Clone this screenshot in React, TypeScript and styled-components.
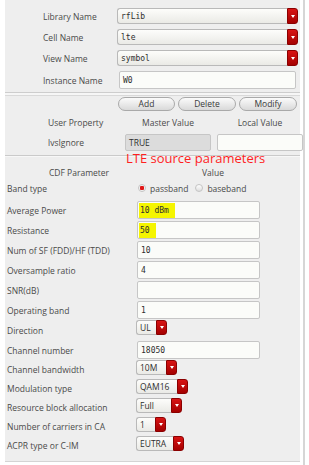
import React from "react";
import styled, { createGlobalStyle } from "styled-components";

const GlobalStyle = createGlobalStyle`
	html, body {
		margin: 0;
		padding: 0;
		background: #ffffff;
	}
	body {
		font-family: "Open Sans", "Noto Sans", sans-serif;
		font-size: 8.5px;
		color: #4a4a4a;
	}
`;

const Frame = styled.div`
	display: flex;
	width: 309px;
	height: 465px;
	padding-left: 5px;
	box-sizing: border-box;
	overflow: hidden;
`;

const Panel = styled.div`
	position: relative;
	width: 295px;
	height: 461px;
	background: #eeeeee;
	border-bottom: 1px solid #d4d4d4;
	display: flex;
	flex-direction: column;
`;

const ScrollEdge = styled.div`
	width: 2px;
	margin-left: 3px;
	height: 100%;
	background: #d6d6d6;
`;

/* ---------- top section ---------- */
const TopSection = styled.div`
	display: flex;
	flex-direction: column;
	gap: 5px;
	padding: 8px 2px 3px 38px;
`;

const TopRow = styled.div`
	display: grid;
	grid-template-columns: 74px 1fr;
	align-items: center;
`;

const Label = styled.span`
	white-space: nowrap;
	font-size: 8.5px;
	color: #4a4a4a;
`;

const Groove = styled.div`
	height: 2px;
	border-top: 1px solid #cdcdcd;
	border-bottom: 1px solid #d9d9d9;
	background: #f6f6f6;
`;

const Line = styled.div`
	height: 1px;
	background: #cacaca;
	border-bottom: 1px solid #f7f7f7;
`;

const Field = styled.div<{ $h?: number; $mono?: boolean; $grey?: boolean; $indent?: number }>`
	height: ${(p) => p.$h ?? 18}px;
	box-sizing: border-box;
	margin-left: ${(p) => p.$indent ?? 0}px;
	border: 1px solid #c6c6c6;
	border-radius: 2px;
	background: ${(p) => (p.$grey ? "#dcdcdc" : "#fbfcf9")};
	display: flex;
	align-items: center;
	padding-left: 3px;
	font-family: ${(p) => (p.$mono ? '"DejaVu Sans Mono", "Liberation Mono", monospace' : '"Open Sans", sans-serif')};
	font-size: ${(p) => (p.$mono ? 8 : 8.5)}px;
	color: #2e2e2e;
	white-space: pre;
`;

const Combo = styled.div<{ $w?: number; $h: number }>`
	display: flex;
	width: ${(p) => (p.$w ? `${p.$w}px` : "100%")};
	height: ${(p) => p.$h}px;
`;

const ComboText = styled.div<{ $mono?: boolean }>`
	flex: 1;
	box-sizing: border-box;
	border: 1px solid #b9b9b9;
	border-right: none;
	border-radius: 3px 0 0 3px;
	background: linear-gradient(#fdfdfb, #eaeae6);
	display: flex;
	align-items: center;
	padding-left: 3px;
	font-family: ${(p) => (p.$mono ? '"DejaVu Sans Mono", "Liberation Mono", monospace' : '"Open Sans", sans-serif')};
	font-size: ${(p) => (p.$mono ? 8 : 8.5)}px;
	color: #2e2e2e;
`;

const DropButton = styled.div`
	width: 11px;
	border-radius: 0 3px 3px 0;
	background: linear-gradient(#d81414, #a50000);
	border: 1px solid #8a0000;
	box-sizing: border-box;
	display: flex;
	align-items: center;
	justify-content: center;
`;

const Caret = styled.span`
	width: 0;
	height: 0;
	border-left: 2.5px solid transparent;
	border-right: 2.5px solid transparent;
	border-top: 3px solid #ffffff;
`;

/* ---------- property section ---------- */
const PropSection = styled.div`
	display: flex;
	flex-direction: column;
	padding: 1px 0 4px 0;
`;

const ButtonBar = styled.div`
	display: flex;
	gap: 3px;
	margin-left: 113px;
`;

const PillButton = styled.button<{ $w: number }>`
	width: ${(p) => p.$w}px;
	height: 14px;
	padding: 0;
	border: 1px solid #a9a9a9;
	border-radius: 7px;
	background: linear-gradient(#fbfbfb, #d9d9d9);
	font-family: "Open Sans", sans-serif;
	font-size: 8.5px;
	color: #3a3a3a;
	line-height: 12px;
`;

const PropGrid = styled.div<{ $top: number; $h: number }>`
	display: grid;
	grid-template-columns: 71px 86px 86px;
	column-gap: 6px;
	align-items: center;
	margin: ${(p) => p.$top}px 0 0 43px;
	height: ${(p) => p.$h}px;
`;

const HeadCell = styled.span<{ $shift?: number; $align?: string }>`
	text-align: ${(p) => p.$align ?? "center"};
	padding-left: ${(p) => p.$shift ?? 0}px;
	white-space: nowrap;
	font-size: 8.5px;
	color: #4a4a4a;
`;

/* ---------- cdf section ---------- */
const CdfSection = styled.div`
	display: flex;
	flex-direction: column;
	padding: 7px 0 0 2px;
`;

const Annotation = styled.div`
	position: absolute;
	top: 149px;
	left: 121px;
	font-family: "Open Sans", "Noto Sans", sans-serif;
	font-size: 13px;
	color: #ff1f1f;
	white-space: nowrap;
`;

const CdfRow = styled.div<{ $h: number }>`
	display: grid;
	grid-template-columns: 129px 1fr;
	height: ${(p) => p.$h}px;
	align-items: center;
`;

const ComboCell = styled.div`
	align-self: start;
	display: flex;
`;

const FieldCell = styled.div`
	width: 123px;
	margin-left: 1px;
`;

const Mark = styled.span`
	background: #f5f500;
	padding: 3px 6px 3px 1px;
	margin-left: -2px;
`;

const RadioGroup = styled.div`
	display: flex;
	align-items: center;
	margin-left: 2px;
	gap: 4px;
`;

const Radio = styled.span<{ $on?: boolean }>`
	width: 8px;
	height: 8px;
	box-sizing: border-box;
	border-radius: 50%;
	border: 1px solid #c4c4c4;
	background: ${(p) => (p.$on ? "radial-gradient(circle, #e01818 0 2px, #f4f4f4 2.5px)" : "linear-gradient(#ffffff, #dedede)")};
`;

const RadioLabel = styled.span`
	margin-right: 3px;
	font-size: 8.5px;
	color: #4a4a4a;
`;

type ComboProps = { value: string; w?: number; h: number; mono?: boolean };

const ComboBox = ({ value, w, h, mono }: ComboProps) => (
	<Combo $w={w} $h={h}>
		<ComboText $mono={mono}>{value}</ComboText>
		<DropButton>
			<Caret />
		</DropButton>
	</Combo>
);

const cdfFields: { label: string; value: React.ReactNode }[] = [
	{ label: "Average Power", value: <Mark>10 dBm</Mark> },
	{ label: "Resistance", value: <Mark>50</Mark> },
	{ label: "Num of SF (FDD)/HF (TDD)", value: "10" },
	{ label: "Oversample ratio", value: "4" },
	{ label: "SNR(dB)", value: "" },
	{ label: "Operating band", value: "1" },
];

const cdfCombos: { label: string; value: string; w: number; h: number }[] = [
	{ label: "Channel bandwidth", value: "10M", w: 41, h: 19 },
	{ label: "Modulation type", value: "QAM16", w: 52, h: 19 },
	{ label: "Resource block allocation", value: "Full", w: 46, h: 19 },
	{ label: "Number of carriers in CA", value: "1", w: 30, h: 19 },
	{ label: "ACPR type or C-IM", value: "EUTRA", w: 48, h: 19 },
];

const App: React.FC = () => {
	return (
		<>
			<GlobalStyle />
			<Frame>
				<Panel>
					<TopSection>
						<TopRow>
							<Label>Library Name</Label>
							<ComboBox value="rfLib" h={16} mono />
						</TopRow>
						<TopRow>
							<Label>Cell Name</Label>
							<ComboBox value="lte" h={16} mono />
						</TopRow>
						<TopRow>
							<Label>View Name</Label>
							<ComboBox value="symbol" h={16} mono />
						</TopRow>
						<TopRow>
							<Label>Instance Name</Label>
							<Field $h={18} $mono $indent={2} style={{ marginRight: 2 }}>
								W0
							</Field>
						</TopRow>
					</TopSection>
					<Groove />
					<PropSection>
						<ButtonBar>
							<PillButton $w={57}>Add</PillButton>
							<PillButton $w={58}>Delete</PillButton>
							<PillButton $w={58}>Modify</PillButton>
						</ButtonBar>
						<PropGrid $top={4} $h={14}>
							<Label>User Property</Label>
							<HeadCell>Master Value</HeadCell>
							<HeadCell>Local Value</HeadCell>
						</PropGrid>
						<PropGrid $top={5} $h={17}>
							<Label>lvsIgnore</Label>
							<Field $h={17} $grey>
								TRUE
							</Field>
							<Field $h={17} />
						</PropGrid>
					</PropSection>
					<Line />
					<CdfSection>
						<CdfRow $h={16}>
							<HeadCell $align="left" $shift={42}>
								CDF Parameter
							</HeadCell>
							<HeadCell $align="left" $shift={66}>
								Value
							</HeadCell>
						</CdfRow>
						<CdfRow $h={16}>
							<Label>Band type</Label>
							<RadioGroup>
								<Radio $on />
								<RadioLabel>passband</RadioLabel>
								<Radio />
								<RadioLabel>baseband</RadioLabel>
							</RadioGroup>
						</CdfRow>
						<div style={{ height: 4 }} />
						{cdfFields.map((f) => (
							<CdfRow key={f.label} $h={20}>
								<Label>{f.label}</Label>
								<FieldCell>
									<Field $h={18} $mono>
										{f.value}
									</Field>
								</FieldCell>
							</CdfRow>
						))}
						<CdfRow $h={20}>
							<Label>Direction</Label>
							<ComboCell>
								<ComboBox value="UL" w={31} h={15} />
							</ComboCell>
						</CdfRow>
						<CdfRow $h={20}>
							<Label>Channel number</Label>
							<FieldCell>
								<Field $h={18} $mono>
									18050
								</Field>
							</FieldCell>
						</CdfRow>
						{cdfCombos.map((c) => (
							<CdfRow key={c.label} $h={c.h}>
								<Label>{c.label}</Label>
								<ComboCell>
									<ComboBox value={c.value} w={c.w} h={15} />
								</ComboCell>
							</CdfRow>
						))}
					</CdfSection>
					<Annotation>LTE source parameters</Annotation>
				</Panel>
				<ScrollEdge />
			</Frame>
		</>
	);
};

export default App;
